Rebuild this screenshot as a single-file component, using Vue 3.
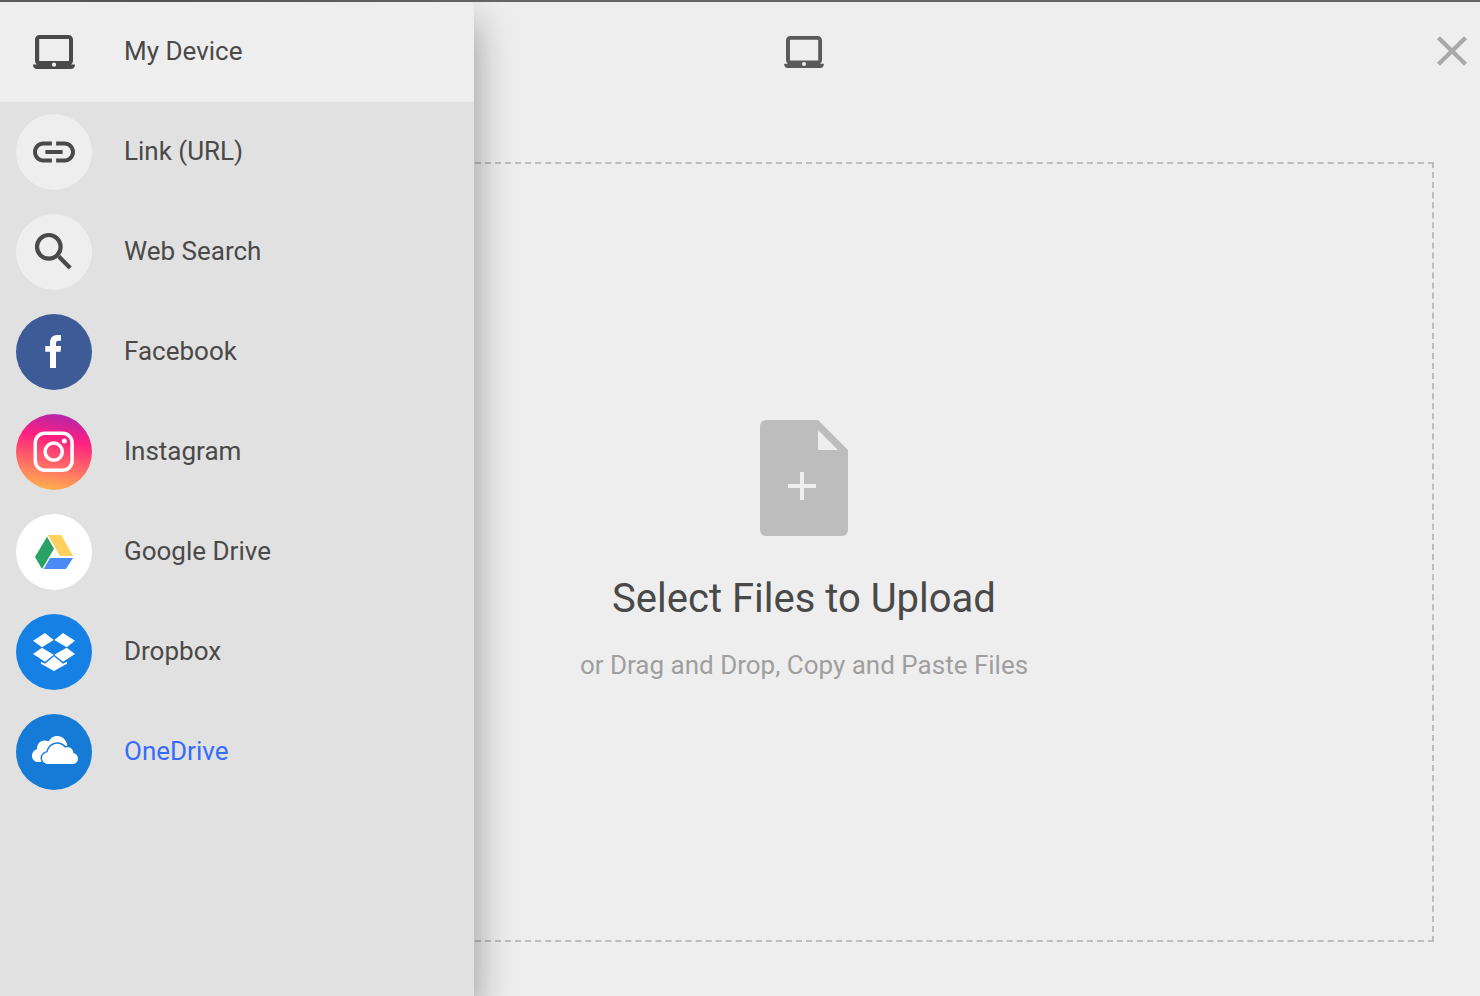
<script setup>
import { h } from 'vue'

const sources = [
  { id: 'device', label: 'My Device' },
  { id: 'link', label: 'Link (URL)' },
  { id: 'search', label: 'Web Search' },
  { id: 'facebook', label: 'Facebook' },
  { id: 'instagram', label: 'Instagram' },
  { id: 'drive', label: 'Google Drive' },
  { id: 'dropbox', label: 'Dropbox' },
  { id: 'onedrive', label: 'OneDrive' },
]

const LaptopIcon = () =>
  h('svg', { viewBox: '0 0 76 76', fill: 'currentColor' }, [
    h('path', {
      'fill-rule': 'evenodd',
      d: 'M23.5 21h29a4.5 4.5 0 0 1 4.5 4.5v21a4.5 4.5 0 0 1-2 4H59c0 2.8-1.5 4.5-4 4.5H21c-2.5 0-4-1.7-4-4.5h4a4.5 4.5 0 0 1-2-4v-21A4.5 4.5 0 0 1 23.5 21zM23.2 25v22h29.8V25zM38 48.6a2.1 2.1 0 1 0 0 4.2a2.1 2.1 0 0 0 0-4.2z',
    }),
  ])
</script>

<template>
  <div class="page">
    <div class="dialog">
      <main class="panel">
        <header class="topbar">
          <LaptopIcon class="topbar-icon" />
          <button class="close" aria-label="Close">
            <svg viewBox="0 0 32 32"><path d="M2.5 2.7L29.5 29.3M29.5 2.7L2.5 29.3" /></svg>
          </button>
        </header>
        <section class="dropzone">
          <svg class="file" viewBox="0 0 88 116">
            <path fill="#bdbdbd" d="M6 0h52l30 30v80a6 6 0 0 1-6 6H6a6 6 0 0 1-6-6V6a6 6 0 0 1 6-6z" />
            <path fill="#eee" d="M58 10l20 20H59.5a1.5 1.5 0 0 1-1.5-1.5z" />
            <path fill="#eee" d="M40 52h4v12h12v4H44v12h-4V68H28v-4h12z" />
          </svg>
          <h1>Select Files to Upload</h1>
          <p>or Drag and Drop, Copy and Paste Files</p>
        </section>
      </main>

      <nav class="drawer">
        <a v-for="s in sources" :key="s.id" class="source" :class="s.id">
          <span class="badge">
            <LaptopIcon v-if="s.id === 'device'" />
            <svg v-else-if="s.id === 'link'" viewBox="0 0 76 76" fill="#494949">
              <path transform="translate(12.8 12.8) scale(2.1)" d="M3.9 12c0-1.71 1.39-3.1 3.1-3.1h4V7H7c-2.76 0-5 2.24-5 5s2.24 5 5 5h4v-1.9H7c-1.71 0-3.1-1.39-3.1-3.1zM7.9 13h8.2v-2H7.900v2zM17 7h-4v1.900h4c1.710 0 3.100 1.390 3.100 3.100s-1.390 3.100-3.100 3.100h-4V17h4c2.760 0 5-2.240 5-5s-2.240-5-5-5z" />
            </svg>
            <svg v-else-if="s.id === 'search'" viewBox="0 0 76 76" fill="none" stroke="#494949" stroke-width="4.2">
              <circle cx="32.8" cy="32.8" r="11.8" />
              <path d="M42.8 42.6L54.2 54" />
            </svg>
            <svg v-else-if="s.id === 'facebook'" viewBox="0 0 76 76" fill="#fff">
              <path d="M34 54V37.7h-4.7V32H34v-3.3c0-5 3-7.7 7.5-7.7H45v5.7h-2.5c-2 0-2.5 1-2.5 2.6V32h5l-.4 5.7H40V54z" />
            </svg>
            <svg v-else-if="s.id === 'instagram'" viewBox="0 0 76 76" fill="none" stroke="#fff" stroke-width="3.5">
              <rect x="19.3" y="19.3" width="36.8" height="36.9" rx="9.5" />
              <circle cx="37.7" cy="37.7" r="8.6" />
              <circle cx="48.3" cy="27" r="2.5" fill="#fff" stroke="none" />
            </svg>
            <svg v-else-if="s.id === 'drive'" viewBox="0 0 76 76">
              <path fill="#ffd05b" d="M32 21h13.3L57 42H44z" />
              <path fill="#28a265" d="M31 22.7l7 12L26 55l-7-12z" />
              <path fill="#4a8af4" d="M34 44h23l-7 11H27.7z" />
            </svg>
            <svg v-else-if="s.id === 'dropbox'" viewBox="0 0 76 76" fill="#fff">
              <path d="M17 26.7L29 19l8.7 7L26 33.3zM38.3 26L47 19l12 7.7-8.3 6.6zM26 33.7l11.7 7-8.7 7L17 40zM38.3 40.7l12.4-7L59 40l-12 7.7zM25 47.7l4 2 9-7.4 9 7.4 4-2v2L38 57l-13-7.3z" />
            </svg>
            <svg v-else viewBox="48 342 228 228" fill="#fff">
              <path d="M113 486C104 486 96 478 96 468C96 458 103 450 111 448C110 432 122 419 137 422L146 424C152 413 161 408 172 408C187 408 199 419 202 436L190 455L135 486Z" />
              <path stroke="#157bd7" stroke-width="9" paint-order="stroke" d="M144 492C134 492 126 484 126 475C126 465 134 458 143 457C145 442 157 431 171 431C182 431 190 436 195 443C209 438 221 447 220 460C229 461 234 468 234 476C234 485 227 492 218 492Z" />
            </svg>
          </span>
          <span class="label">{{ s.label }}</span>
        </a>
      </nav>
    </div>
  </div>
</template>

<style>
body {
  margin: 0;
}
</style>

<style scoped>
.page {
  box-sizing: border-box;
  width: 1480px;
  height: 996px;
  padding-top: 2px;
  overflow: hidden;
  background: linear-gradient(90deg, #5c5a5a 0, #545252 160px, #656363 500px);
  font-family: Roboto, 'Liberation Sans', sans-serif;
  color: #494949;
}
.dialog {
  position: relative;
  height: 994px;
  overflow: hidden;
  background: #eee;
}
.panel {
  display: flex;
  flex-direction: column;
  margin-left: 128px;
  height: 100%;
}
.topbar {
  position: relative;
  display: flex;
  justify-content: center;
  align-items: center;
  height: 100px;
}
.topbar-icon {
  width: 72px;
  height: 72px;
  color: #5a5a5a;
}
.close {
  position: absolute;
  right: 12px;
  top: 33px;
  width: 32px;
  height: 32px;
  padding: 0;
  border: 0;
  background: none;
}
.close svg {
  display: block;
  fill: none;
  stroke: #a9a9a9;
  stroke-width: 4.3;
}
.dropzone {
  box-sizing: border-box;
  display: flex;
  flex-direction: column;
  align-items: center;
  height: 780px;
  margin: 60px 46px 0;
  padding-top: 256px;
  border: 2px dashed #bdbdbd;
}
.file {
  width: 88px;
  height: 116px;
}
h1 {
  margin: 39px 0 0;
  font-size: 40px;
  line-height: 48px;
  font-weight: 400;
}
p {
  margin: 26px 0 0;
  font-size: 26px;
  line-height: 32px;
  color: #9f9f9f;
}
.drawer {
  position: absolute;
  left: 0;
  top: 0;
  width: 474px;
  height: 100%;
  border-top-right-radius: 4px;
  background: #e1e1e1;
  box-shadow: 0 20px 40px rgba(0, 0, 0, 0.39);
}
.source {
  box-sizing: border-box;
  display: flex;
  align-items: center;
  gap: 32px;
  height: 100px;
  padding-left: 16px;
}
.badge {
  width: 76px;
  height: 76px;
  border-radius: 50%;
  background: #eee;
}
.badge svg {
  display: block;
  width: 76px;
  height: 76px;
}
.label {
  padding-bottom: 2px;
  font-size: 26px;
  line-height: 32px;
}
.device {
  background: #eee;
  border-top-right-radius: 4px;
}
.facebook .badge {
  background: #3d5b96;
}
.instagram .badge {
  background: linear-gradient(190deg, #a128b4 0%, #ff1f80 34%, #ffbf4a 100%);
}
.drive .badge {
  background: #fff;
}
.dropbox .badge {
  background: #1681e4;
}
.onedrive .badge {
  background: #157bd7;
}
.onedrive .label {
  color: #366cfb;
}
</style>
